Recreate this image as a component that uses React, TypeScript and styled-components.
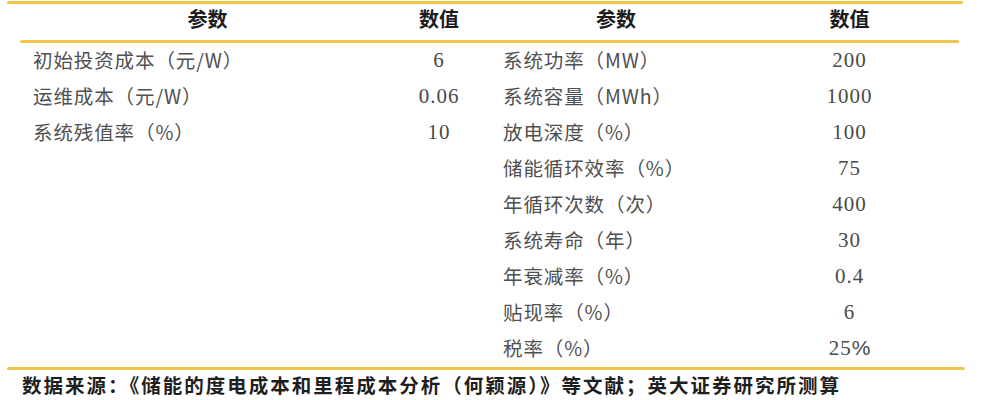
import React from "react";
import styled, { createGlobalStyle } from "styled-components";

const GlobalStyle = createGlobalStyle`
  html, body { margin: 0; padding: 0; background: #ffffff; }
  body {
    width: 982px;
    height: 400px;
    overflow: hidden;
    font-family: "Liberation Serif", "Noto Sans CJK SC", serif;
  }
`;

const Page = styled.div`
  padding: 1px 0 0 7px;
  display: flex;
  flex-direction: column;
`;

const Rule = styled.div<{ $left?: number; $width: number; $thick?: number }>`
  height: ${(p) => p.$thick ?? 3}px;
  width: ${(p) => p.$width}px;
  margin-left: ${(p) => p.$left ?? 0}px;
  background: #f1c64e;
  border-radius: 2px;
`;

const Grid = styled.div`
  display: grid;
  grid-template-columns: 401px 62px 292px 175px;
`;

const HeaderRow = styled(Grid)`
  height: 36px;
  align-items: start;
  padding-top: 1px;
  box-sizing: border-box;
`;

const HeadCell = styled.div`
  text-align: center;
  font-family: "Noto Sans CJK SC", sans-serif;
  font-weight: 700;
  font-size: 20px;
  line-height: 28px;
  color: #1c1c1c;
`;

const BodyGrid = styled(Grid)`
  grid-auto-rows: 36px;
  align-items: center;
`;

const Param = styled.div<{ $indent: number }>`
  padding: 0 0 3px ${(p) => p.$indent}px;
  font-family: "Noto Sans CJK SC", sans-serif;
  font-size: 19.5px;
  letter-spacing: 0.9px;
  line-height: 30px;
  color: #505050;
  white-space: nowrap;
`;

const Value = styled.div`
  padding-bottom: 3px;
  text-align: center;
  font-family: "Liberation Serif", serif;
  font-size: 21px;
  letter-spacing: 1px;
  line-height: 30px;
  color: #4a4a4a;
`;

const SansPct = styled.span`
  font-family: "Liberation Sans", sans-serif;
  letter-spacing: 0;
`;

const Footer = styled.div`
  padding: 2px 0 0 15px;
  font-family: "Noto Sans CJK SC", sans-serif;
  font-weight: 700;
  font-size: 19.5px;
  letter-spacing: 2px;
  line-height: 26px;
  color: #1f1f1f;
  white-space: nowrap;
`;

type Row = { name: string; value: React.ReactNode };

const left: Row[] = [
  { name: "初始投资成本（元/W）", value: "6" },
  { name: "运维成本（元/W）", value: "0.06" },
  { name: "系统残值率（%）", value: "10" },
];

const right: Row[] = [
  { name: "系统功率（MW）", value: "200" },
  { name: "系统容量（MWh）", value: "1000" },
  { name: "放电深度（%）", value: "100" },
  { name: "储能循环效率（%）", value: "75" },
  { name: "年循环次数（次）", value: "400" },
  { name: "系统寿命（年）", value: "30" },
  { name: "年衰减率（%）", value: "0.4" },
  { name: "贴现率（%）", value: "6" },
  {
    name: "税率（%）",
    value: (
      <>
        25<SansPct>%</SansPct>
      </>
    ),
  },
];

export default function App() {
  return (
    <>
      <GlobalStyle />
      <Page>
        <Rule $width={956} />
        <HeaderRow>
          <HeadCell>参数</HeadCell>
          <HeadCell>数值</HeadCell>
          <HeadCell>参数</HeadCell>
          <HeadCell>数值</HeadCell>
        </HeaderRow>
        <Rule $left={13} $width={939} />
        <BodyGrid>
          {right.map((r, i) => {
            const l = left[i];
            return (
              <React.Fragment key={i}>
                <Param $indent={26}>{l ? l.name : ""}</Param>
                <Value>{l ? l.value : ""}</Value>
                <Param $indent={33}>{r.name}</Param>
                <Value>{r.value}</Value>
              </React.Fragment>
            );
          })}
        </BodyGrid>
        <Rule $width={958} />
        <Footer>数据来源：《储能的度电成本和里程成本分析（何颖源）》等文献；英大证券研究所测算</Footer>
      </Page>
    </>
  );
}
